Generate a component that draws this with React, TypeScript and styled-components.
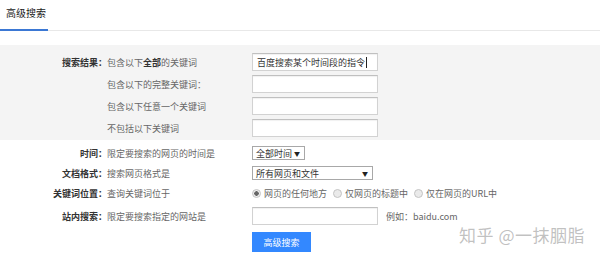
import styled, { createGlobalStyle, css } from 'styled-components'

const GlobalStyle = createGlobalStyle`
  html, body {
    margin: 0;
    padding: 0;
    background: #fff;
  }
  body {
    font-family: 'Noto Sans CJK SC', 'Liberation Sans', sans-serif;
    font-size: 9px;
    color: #333;
  }
`

const Page = styled.div`
  position: relative;
  width: 600px;
  height: 259px;
  overflow: hidden;
`

const Header = styled.div`
  height: 30px;
  border-bottom: 1px solid #e8e8e8;
  display: flex;
  align-items: flex-end;
`

const Tab = styled.div`
  height: 29px;
  width: 42px;
  padding-left: 6px;
  font-size: 10px;
  color: #222;
  line-height: 26px;
  white-space: nowrap;
  border-bottom: 2px solid #3b78d4;
  margin-bottom: -1px;
`

const Band = styled.div`
  margin-top: 14px;
  background: #f4f4f4;
  padding: 8px 0 3px;
  display: grid;
  row-gap: 4px;
`

const Lower = styled.div`
  padding-top: 6px;
  display: grid;
  row-gap: 7px;
`

const Row = styled.div<{ h: number }>`
  ${({ h }) => css`
    height: ${h}px;
    display: grid;
    grid-template-columns: 107px 145px auto;
    align-items: center;
  `}
`

const Label = styled.div`
  text-align: right;
  font-weight: bold;
  color: #333;
  white-space: nowrap;
`

const Desc = styled.div`
  color: #666;
  white-space: nowrap;

  b {
    color: #333;
  }
`

const Field = styled.div`
  width: 120px;
  height: 16px;
  background: #fff;
  border: 1px solid #d2d2d2;
  border-top-color: #c0c0c0;
  box-shadow: inset 0 1px 1px rgba(0, 0, 0, 0.06);
  display: flex;
  align-items: center;
  padding-left: 4px;
  color: #333;
  white-space: nowrap;
`

const Caret = styled.span`
  display: inline-block;
  width: 1px;
  height: 11px;
  background: #222;
  margin-left: 1px;
`

const Control = styled.div`
  display: flex;
  align-items: center;
  gap: 8px;
`

const Select = styled.div<{ w: number }>`
  ${({ w }) => css`
    width: ${w}px;
    height: 12px;
    border: 1px solid #a8a8a8;
    background: #fff;
    display: flex;
    align-items: center;
    justify-content: space-between;
    padding: 0 4px 0 3px;
    color: #333;
    white-space: nowrap;
  `}
`

const Arrow = styled.span`
  font-size: 6px;
  color: #222;
`

const RadioGroup = styled.div`
  display: flex;
  align-items: center;
  gap: 6px;
  color: #666;
  white-space: nowrap;
`

const RadioItem = styled.label`
  display: flex;
  align-items: center;
  gap: 3px;
`

const Dot = styled.span<{ checked?: boolean }>`
  ${({ checked }) => css`
    width: 7px;
    height: 7px;
    border-radius: 50%;
    border: 1px solid #c4c4c4;
    background: ${checked ? 'radial-gradient(circle, #666 0 2px, #eee 2.5px)' : '#eaeaea'};
  `}
`

const Hint = styled.span`
  color: #666;
  white-space: nowrap;
`

const Button = styled.div`
  width: 59px;
  height: 20px;
  background: #3388ff;
  color: #fff;
  font-size: 9px;
  display: flex;
  align-items: center;
  justify-content: center;
`

const Watermark = styled.div`
  position: absolute;
  right: 15px;
  bottom: 12px;
  font-size: 17px;
  color: rgba(140, 140, 140, 0.55);
  letter-spacing: 0.5px;
  text-shadow: 0 0 1px rgba(255, 255, 255, 0.8);
`

const keywordRows = [
  { label: '搜索结果：', desc: <>包含以下<b>全部</b>的关键词</>, value: '百度搜索某个时间段的指令' },
  { label: '', desc: '包含以下的完整关键词：' },
  { label: '', desc: '包含以下任意一个关键词' },
  { label: '', desc: '不包括以下关键词' },
]

export default function App() {
  return (
    <Page>
      <GlobalStyle />
      <Header>
        <Tab>高级搜索</Tab>
      </Header>

      <Band>
        {keywordRows.map(({ label, desc, value }, i) => (
          <Row h={18} key={i}>
            <Label>{label}</Label>
            <Desc>{desc}</Desc>
            <Field>
              {value}
              {value && <Caret />}
            </Field>
          </Row>
        ))}
      </Band>

      <Lower>
        <Row h={13}>
          <Label>时间：</Label>
          <Desc>限定要搜索的网页的时间是</Desc>
          <Control>
            <Select w={44}>
              全部时间 <Arrow>▼</Arrow>
            </Select>
          </Control>
        </Row>
        <Row h={13}>
          <Label>文档格式：</Label>
          <Desc>搜索网页格式是</Desc>
          <Control>
            <Select w={112}>
              所有网页和文件 <Arrow>▼</Arrow>
            </Select>
          </Control>
        </Row>
        <Row h={14}>
          <Label>关键词位置：</Label>
          <Desc>查询关键词位于</Desc>
          <RadioGroup>
            <RadioItem>
              <Dot checked />
              网页的任何地方
            </RadioItem>
            <RadioItem>
              <Dot />
              仅网页的标题中
            </RadioItem>
            <RadioItem>
              <Dot />
              仅在网页的URL中
            </RadioItem>
          </RadioGroup>
        </Row>
        <Row h={18}>
          <Label>站内搜索：</Label>
          <Desc>限定要搜索指定的网站是</Desc>
          <Control>
            <Field />
            <Hint>例如：baidu.com</Hint>
          </Control>
        </Row>
        <Row h={20}>
          <span />
          <span />
          <Button>高级搜索</Button>
        </Row>
      </Lower>

      <Watermark>知乎 @一抹胭脂</Watermark>
    </Page>
  )
}
